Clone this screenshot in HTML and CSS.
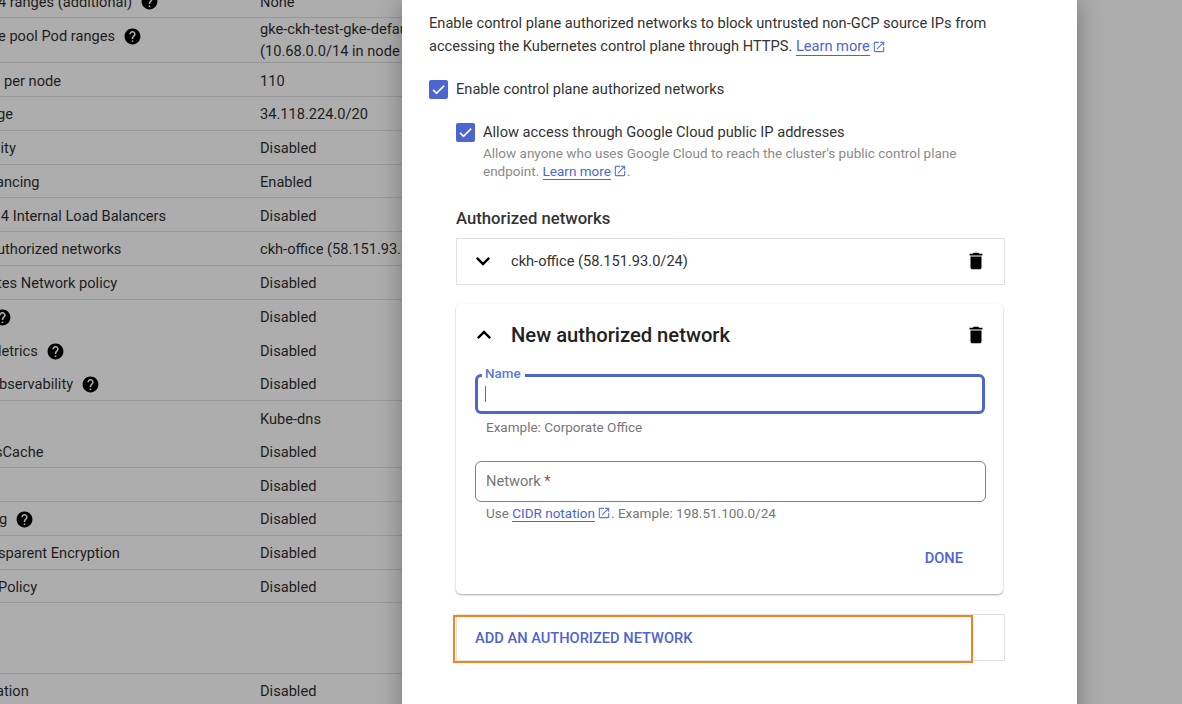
FILE: index.html
```html
<!DOCTYPE html>
<html lang="en">
<head>
<meta charset="utf-8">
<title>Control plane authorized networks</title>
<link rel="stylesheet" href="styles.css">
</head>
<body>
<svg class="defs" width="0" height="0" aria-hidden="true">
  <symbol id="i-help" viewBox="0 0 24 24"><path d="M12 2C6.48 2 2 6.48 2 12s4.48 10 10 10 10-4.48 10-10S17.52 2 12 2zm1 17h-2v-2h2v2zm2.07-7.75l-.9.92C13.45 12.9 13 13.5 13 15h-2v-.5c0-1.1.45-2.1 1.17-2.83l1.24-1.26c.37-.36.59-.86.59-1.41 0-1.1-.9-2-2-2s-2 .9-2 2H8c0-2.21 1.79-4 4-4s4 1.79 4 4c0 .88-.36 1.68-.93 2.25z"/></symbol>
  <symbol id="i-open" viewBox="0 0 24 24"><path d="M19 19H5V5h7V3H5c-1.11 0-2 .9-2 2v14c0 1.1.89 2 2 2h14c1.1 0 2-.9 2-2v-7h-2v7zM14 3v2h3.59l-9.83 9.83 1.41 1.41L19 6.41V10h2V3h-7z"/></symbol>
  <symbol id="i-check" viewBox="0 0 24 24"><path d="M9 16.2 4.8 12l-1.4 1.4L9 19 21 7l-1.4-1.4z"/></symbol>
  <symbol id="i-down" viewBox="0 0 24 24"><path d="M16.59 8.59 12 13.17 7.41 8.59 6 10l6 6 6-6z"/></symbol>
  <symbol id="i-up" viewBox="0 0 24 24"><path d="M12 8l-6 6 1.41 1.41L12 10.83l4.59 4.58L18 14z"/></symbol>
  <symbol id="i-trash" viewBox="0 0 24 24"><path d="M6 19c0 1.1.9 2 2 2h8c1.1 0 2-.9 2-2V7H6v12zM19 4h-3.5l-1-1h-5l-1 1H5v2h14V4z"/></symbol>
</svg>

<main class="page">
  <section class="details">
    <div class="row first"><div class="label cut-2">4 ranges (additional)<svg class="help"><use href="#i-help"/></svg></div><div class="value">None</div></div>
    <div class="row double"><div class="label top cut-2">e pool Pod ranges<svg class="help"><use href="#i-help"/></svg></div><div class="value">gke-ckh-test-gke-default-pool<br>(10.68.0.0/14 in node pool)</div></div>
    <div class="row"><div class="label cut-p4">per node</div><div class="value">110</div></div>
    <div class="row"><div class="label cut-3">ge</div><div class="value">34.118.224.0/20</div></div>
    <div class="row"><div class="label cut-3">lity</div><div class="value">Disabled</div></div>
    <div class="row"><div class="label cut-4">ancing</div><div class="value">Enabled</div></div>
    <div class="row"><div class="label cut-3">.4 Internal Load Balancers</div><div class="value">Disabled</div></div>
    <div class="row"><div class="label cut-3">uthorized networks</div><div class="value">ckh-office (58.151.93.0/24)</div></div>
    <div class="row"><div class="label cut-3">tes Network policy</div><div class="value">Disabled</div></div>
    <div class="row plain"><div class="label cut-6"><svg class="help flush"><use href="#i-help"/></svg></div><div class="value">Disabled</div></div>
    <div class="row plain"><div class="label cut-2">letrics<svg class="help"><use href="#i-help"/></svg></div><div class="value">Disabled</div></div>
    <div class="row"><div class="label cut-1">bservability<svg class="help"><use href="#i-help"/></svg></div><div class="value">Disabled</div></div>
    <div class="row plain"><div class="label"></div><div class="value">Kube-dns</div></div>
    <div class="row"><div class="label cut-5">sCache</div><div class="value">Disabled</div></div>
    <div class="row"><div class="label"></div><div class="value">Disabled</div></div>
    <div class="row"><div class="label cut-1">g<svg class="help"><use href="#i-help"/></svg></div><div class="value">Disabled</div></div>
    <div class="row"><div class="label cut-2">sparent Encryption</div><div class="value">Disabled</div></div>
    <div class="row"><div class="label cut-2">Policy</div><div class="value">Disabled</div></div>
    <div class="row gap"></div>
    <div class="row"><div class="label cut-4">ation</div><div class="value">Disabled</div></div>
  </section>

  <section class="modal">
    <p class="intro">Enable control plane authorized networks to block untrusted non-GCP source IPs from accessing the Kubernetes control plane through HTTPS. <a class="link" href="#">Learn more</a><svg class="ext"><use href="#i-open"/></svg></p>

    <div class="check check-outer">
      <span class="box"><svg><use href="#i-check"/></svg></span>
      <span>Enable control plane authorized networks</span>
    </div>

    <div class="nested">
      <div class="check">
        <span class="box"><svg><use href="#i-check"/></svg></span>
        <span>Allow access through Google Cloud public IP addresses</span>
      </div>
      <p class="desc">Allow anyone who uses Google Cloud to reach the cluster's public control plane endpoint. <a class="link" href="#">Learn more</a><svg class="ext small"><use href="#i-open"/></svg>.</p>

      <h2 class="subtitle">Authorized networks</h2>

      <div class="net-row">
        <svg class="chev"><use href="#i-down"/></svg>
        <span class="net-name">ckh-office (58.151.93.0/24)</span>
        <svg class="trash"><use href="#i-trash"/></svg>
      </div>

      <div class="card">
        <div class="card-head">
          <svg class="chev"><use href="#i-up"/></svg>
          <h3 class="card-title">New authorized network</h3>
          <svg class="trash"><use href="#i-trash"/></svg>
        </div>
        <div class="field focus">
          <span class="float">Name</span>
          <span class="caret"></span>
        </div>
        <p class="hint">Example: Corporate Office</p>
        <div class="field idle"><span class="placeholder">Network <em>*</em></span></div>
        <p class="hint hint-two">Use <a class="link" href="#">CIDR notation</a><svg class="ext small"><use href="#i-open"/></svg>. Example: 198.51.100.0/24</p>
        <div class="card-actions"><span class="btn">DONE</span></div>
      </div>

      <div class="add-row">
        <span class="btn add-btn">ADD AN AUTHORIZED NETWORK</span>
        <span class="highlight"></span>
      </div>
    </div>
  </section>
</main>
</body>
</html>
```

FILE: styles.css
```css
* { box-sizing: border-box; }
html, body { margin: 0; height: 100%; }
body {
  overflow: hidden;
  background: #adadad;
  font-family: Roboto, "Liberation Sans", sans-serif;
  font-size: 14.63px;
  color: #2b2b2b;
}
.defs { display: block; height: 0; }
.page { display: flex; height: 704px; overflow: hidden; }
p, h2, h3 { margin: 0; font-weight: 400; }

/* dimmed page behind the dialog */
.details { width: 402px; flex: none; overflow: hidden; margin-top: -15.5px; color: #1d1d1d; }
.row {
  display: grid;
  grid-template-columns: 260px 1fr;
  align-items: center;
  height: 33.75px;
  padding-top: 1.5px;
  border-bottom: 1px solid #999;
  white-space: nowrap;
}
.row.plain { border-bottom: 0; }
.row.double { height: 45.2px; line-height: 22.4px; padding-top: 0; }
.row.gap { height: 70.5px; }
.label { display: flex; align-items: center; height: 20px; }
.label.top { align-self: start; margin-top: 8px; }
.cut-1 { margin-left: -1px; }
.cut-2 { margin-left: -2px; }
.cut-3 { margin-left: -3px; }
.cut-4 { margin-left: -4px; }
.cut-5 { margin-left: -5px; }
.cut-6 { margin-left: -7px; }
.cut-p4 { margin-left: 4px; }
.value { overflow: hidden; }
.help { width: 19px; height: 19px; margin-left: 8px; fill: #000; flex: none; }
.help.flush { margin-left: 0; }

/* dialog */
.modal {
  width: 675px;
  height: 760px;
  flex: none;
  padding: 12px 27px 0;
  background: #fff;
  box-shadow: 0 0 24px rgba(0, 0, 0, .32);
  position: relative;
  color: #333;
}
.intro { line-height: 23px; width: 600px; }
.link { color: #4d65d0; text-decoration: none; border-bottom: 1px solid #4d65d0; }
.ext { width: 14px; height: 14px; margin-left: 2px; fill: #5f78db; vertical-align: -3px; }
.ext.small { width: 14px; height: 14px; vertical-align: -2px; }
.check { display: flex; align-items: center; gap: 8px; height: 20px; }
.check-outer { margin-top: 21px; }
.box {
  display: flex;
  width: 19px;
  height: 19px;
  border-radius: 2px;
  background: #4d65d0;
  flex: none;
}
.box svg { width: 19px; height: 19px; fill: #fff; stroke: #fff; stroke-width: .6; padding: 1.5px; }
.nested { margin: 23px 0 0 27px; width: 549px; position: relative; }
.desc { margin: 2px 0 0 27px; width: 500px; font-size: 13.5px; line-height: 18.4px; color: #8a8a8a; }
.subtitle { margin-top: 28px; font-size: 16.7px; font-weight: 500; line-height: 20px; color: #333; }
.net-row {
  display: flex;
  align-items: center;
  height: 47px;
  margin-top: 9px;
  padding: 0 16px;
  border: 1px solid #e1e1e1;
}
.chev { width: 28px; height: 28px; fill: #000; flex: none; margin-left: -4px; }
.net-name { margin-left: 14px; flex: 1; }
.trash { width: 22px; height: 22px; fill: #000; flex: none; margin-right: 1px; }
.card {
  width: 547px;
  height: 290px;
  margin-top: 19px;
  padding: 20px 18px 0 20px;
  border-radius: 5px;
  box-shadow: 0 1px 2px rgba(0, 0, 0, .34), 0 0 1px rgba(0, 0, 0, .05);
}
.card-head { display: flex; align-items: center; height: 22px; }
.card-head .chev { margin-left: -6px; }
.card-head .trash { margin-right: -2px; }
.card-title { flex: 1; margin-left: 13px; font-size: 20.2px; font-weight: 500; color: #222; }
.field { position: relative; width: 510px; border-radius: 6px; background: #fff; }
.field.focus { height: 40px; margin-top: 28px; margin-left: -1px; border: 3px solid #4d65d0; }
.field.idle { height: 41px; margin-top: 25px; border: 1px solid #808080; padding: 10px; margin-left: -1px; width: 511px; line-height: 19px; }
.float {
  position: absolute;
  left: 4px;
  top: -11px;
  padding: 0 4px 0 3px;
  background: #fff;
  font-size: 13.4px;
  font-weight: 500;
  line-height: 16px;
  color: #5f78db;
}
.caret { position: absolute; left: 7px; top: 9px; width: 1px; height: 16px; background: #4d65d0; }
.placeholder { color: #777; }
.placeholder em { font-style: normal; color: #b3453c; }
.hint { margin: 4px 0 0 10px; font-size: 13.5px; line-height: 18px; color: #777; }
.hint-two { margin-top: 2px; }
.card-actions { display: flex; justify-content: flex-end; margin-top: 26px; padding-right: 22px; }
.btn { color: #4d65d0; font-weight: 500; font-size: 14.63px; line-height: 20px; }
.add-btn { margin-top: 1px; }
.add-row {
  position: relative;
  display: flex;
  align-items: center;
  height: 47px;
  margin-top: 20px;
  padding-left: 18px;
  border: 1px solid #e1e1e1;
}
.highlight {
  position: absolute;
  left: -4px;
  top: 0;
  width: 520px;
  height: 48px;
  border: 2px solid #f58220;
}
```
